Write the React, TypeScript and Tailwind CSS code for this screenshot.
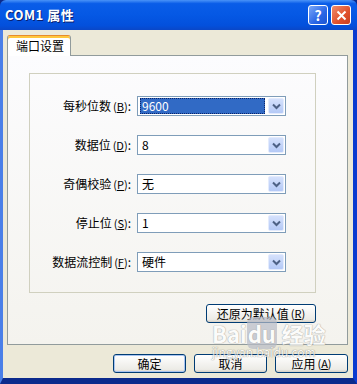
const rows = [
  { label: '每秒位数', key: 'B', value: '9600', selected: true },
  { label: '数据位', key: 'D', value: '8' },
  { label: '奇偶校验', key: 'P', value: '无' },
  { label: '停止位', key: 'S', value: '1' },
  { label: '数据流控制', key: 'F', value: '硬件' },
];

const font = { fontFamily: '"Noto Sans CJK SC", "Liberation Sans", sans-serif' };

function Chevron() {
  return (
    <svg width="9" height="7" viewBox="0 0 9 7">
      <path d="M1 1.5 L4.5 5 L8 1.5" fill="none" stroke="#4d6185" strokeWidth="2" />
    </svg>
  );
}

function Combo({ value, selected }: { value: string; selected?: boolean }) {
  return (
    <div className="flex h-[20px] w-[149px] items-stretch border border-[#7f9db9] bg-white p-[1px]">
      <div className="flex flex-1 items-center pl-[1px] pr-[3px]">
        {selected ? (
          <span className="flex h-full w-full items-center border border-dotted border-[#0a246a] bg-[#316ac5] pl-[1px] text-[12px] leading-none text-white">
            {value}
          </span>
        ) : (
          <span className="pl-[2px] text-[12px] leading-none text-black">{value}</span>
        )}
      </div>
      <div className="flex w-[16px] items-center justify-center rounded-[2px] border border-[#e3ebfd] bg-[linear-gradient(to_bottom,#d5e1fc,#b4c9f6)]">
        <Chevron />
      </div>
    </div>
  );
}

function XpButton({ children, isDefault }: { children: React.ReactNode; isDefault?: boolean }) {
  return (
    <button
      className={
        'flex h-[19px] w-[73px] items-center justify-center rounded-[3px] border border-[#003c74] bg-[linear-gradient(to_bottom,#ffffff,#ecebe6_85%,#d6d0c5)] text-[12px] leading-none text-black ' +
        (isDefault ? 'shadow-[inset_0_0_0_1px_#a8c4f0]' : '')
      }
    >
      {children}
    </button>
  );
}

function Key({ k }: { k: string }) {
  return (
    <span className="ml-[2px] text-[11px]">
      (<span className="underline underline-offset-1">{k}</span>)
    </span>
  );
}

export default function App() {
  return (
    <div className="relative flex h-[384px] w-[357px] flex-col overflow-hidden bg-[#0b2a8c]" style={font}>
      {/* title bar */}
      <div className="flex h-[30px] shrink-0 items-center justify-between rounded-t-[6px] bg-[linear-gradient(to_bottom,#4a93f8_0%,#0a5de8_12%,#0558e4_50%,#0350dc_85%,#0a47c8_100%)] pl-[5px] pr-[6px]">
        <span className="text-[13px] font-bold tracking-[0.5px] text-white [text-shadow:1px_1px_0_#0a1e6e]">COM1 属性</span>
        <div className="flex gap-[3px]">
          <div className="flex h-[20px] w-[20px] items-center justify-center rounded-[3px] border border-white bg-[linear-gradient(135deg,#7aa8f8,#2a66e6_60%,#1d55d2)] text-[14px] font-bold leading-none text-white">
            ?
          </div>
          <div className="flex h-[20px] w-[20px] items-center justify-center rounded-[3px] border border-white bg-[linear-gradient(135deg,#f08c6c,#e0502c_60%,#c83e20)]">
            <svg width="11" height="11" viewBox="0 0 11 11">
              <path d="M1.5 1.5 L9.5 9.5 M9.5 1.5 L1.5 9.5" stroke="white" strokeWidth="2" />
            </svg>
          </div>
        </div>
      </div>

      {/* body */}
      <div className="flex flex-1 flex-col border-l-[3px] border-r-[4px] border-b-[6px] border-l-[#4a7fe8] border-r-[#0b3bd0] border-b-[#0b2a8c] bg-[#ece9d8] pl-[4px] pr-[5px] pt-[5px]">
        {/* tab */}
        <div className="flex">
          <div className="relative z-10 -mb-[1px] flex h-[21px] w-[64px] items-center rounded-t-[3px] border border-b-0 border-[#919b9c] border-t-[#e68b2c] bg-white pl-[8px] text-[12px] leading-none text-black shadow-[inset_0_2px_0_#ffc73c]">
            端口设置
          </div>
        </div>
        {/* panel */}
        <div className="flex h-[290px] flex-col border border-[#919b9c] bg-[linear-gradient(to_bottom,#fcfcfe,#f4f3ee)] pl-[21px] pr-[31px] pt-[17px]">
          <div className="flex h-[220px] flex-col gap-[19px] border border-[#d0d0bf] pt-[22px]">
            {rows.map((r) => (
              <div key={r.key} className="flex items-center">
                <div className="flex w-[107px] items-center justify-end pr-[6px] text-[12px] leading-none text-black">
                  {r.label}
                  <Key k={r.key} />:
                </div>
                <Combo value={r.value} selected={r.selected} />
              </div>
            ))}
          </div>
          <div className="mt-[11px] flex justify-end">
            <button className="flex h-[19px] w-[110px] items-center justify-center rounded-[3px] border border-[#003c74] bg-[linear-gradient(to_bottom,#ffffff,#ecebe6_85%,#d6d0c5)] text-[12px] leading-none text-black">
              还原为默认值<Key k="R" />
            </button>
          </div>
        </div>
        {/* buttons */}
        <div className="mt-[9px] flex justify-end gap-[8px]">
          <XpButton isDefault>确定</XpButton>
          <XpButton>取消</XpButton>
          <XpButton>
            应用<Key k="A" />
          </XpButton>
        </div>
      </div>

      {/* watermark */}
      <div className="pointer-events-none absolute left-[212px] top-[322px] flex flex-col items-start opacity-70">
        <span className="text-[22px] font-bold leading-none text-white [text-shadow:0_0_1px_#8a8a8a,0_0_1px_#8a8a8a]">
          Bai<span className="rounded-[6px] bg-[#b8bcc8] px-[1px]">du</span> 经验
        </span>
        <span className="mt-[2px] text-[12px] leading-none text-white [text-shadow:0_0_1px_#777,0_0_1px_#777]">jingyan.baidu.com</span>
      </div>
    </div>
  );
}
